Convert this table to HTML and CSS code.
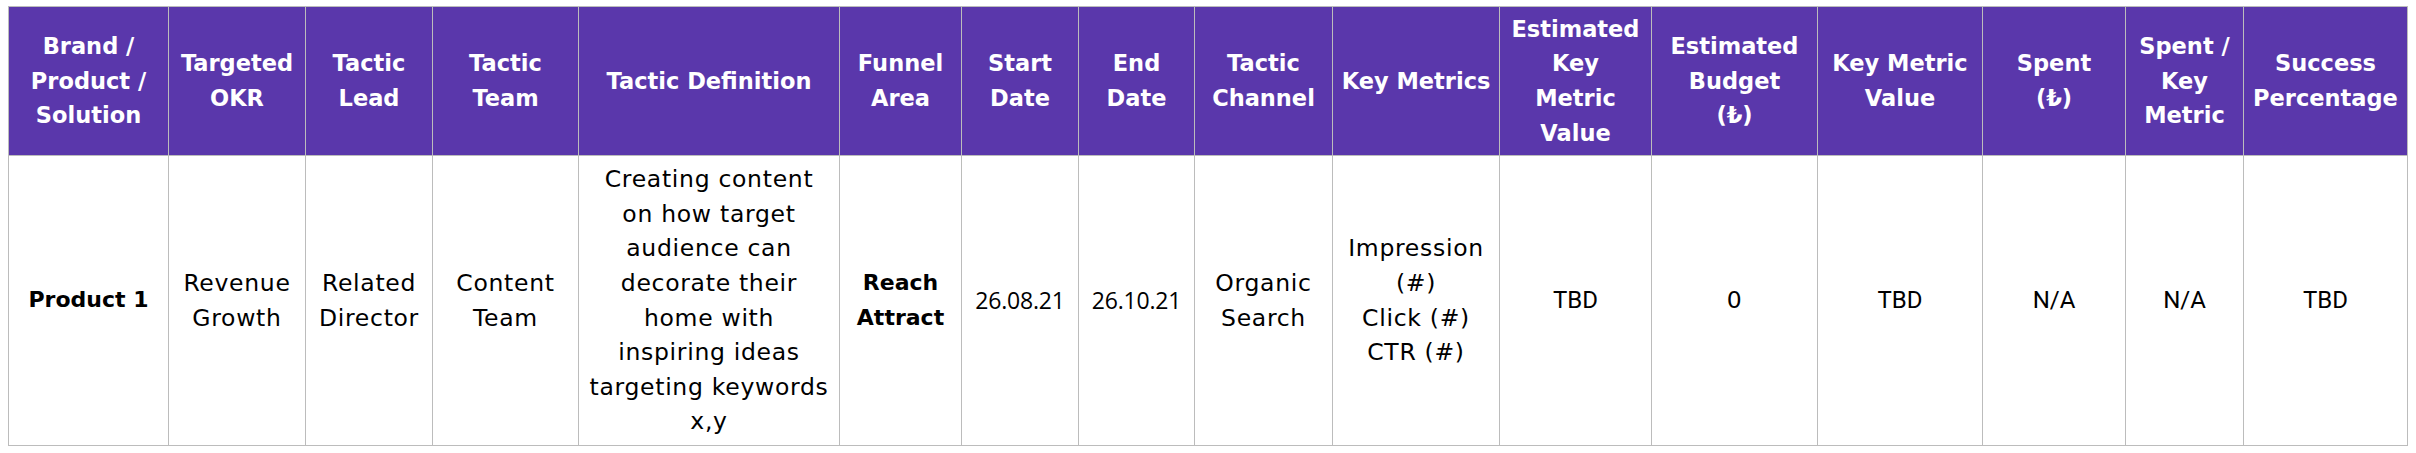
FILE: index.html
```html
<!DOCTYPE html>
<html lang="en">
<head>
<meta charset="utf-8">
<title>Tactics</title>
<link rel="stylesheet" href="styles.css">
</head>
<body>
<table class="plan">
  <colgroup>
    <col class="c1"><col class="c2"><col class="c3"><col class="c4"><col class="c5"><col class="c6"><col class="c7"><col class="c8">
    <col class="c9"><col class="c10"><col class="c11"><col class="c12"><col class="c13"><col class="c14"><col class="c15"><col class="c16">
  </colgroup>
  <thead>
    <tr>
      <th>Brand /<br>Product /<br>Solution</th>
      <th>Targeted<br>OKR</th>
      <th>Tactic<br>Lead</th>
      <th>Tactic<br>Team</th>
      <th>Tactic Definition</th>
      <th>Funnel<br>Area</th>
      <th>Start<br>Date</th>
      <th>End<br>Date</th>
      <th>Tactic<br>Channel</th>
      <th>Key Metrics</th>
      <th>Estimated<br>Key<br>Metric<br>Value</th>
      <th>Estimated<br>Budget<br>(₺)</th>
      <th>Key Metric<br>Value</th>
      <th>Spent<br>(₺)</th>
      <th>Spent /<br>Key<br>Metric</th>
      <th>Success<br>Percentage</th>
    </tr>
  </thead>
  <tbody>
    <tr>
      <td class="strong">Product 1</td>
      <td>Revenue<br>Growth</td>
      <td>Related<br>Director</td>
      <td>Content<br>Team</td>
      <td>Creating content<br>on how target<br>audience can<br>decorate their<br>home with<br>inspiring ideas<br>targeting keywords<br>x,y</td>
      <td class="strong">Reach<br>Attract</td>
      <td class="date">26.08.21</td>
      <td class="date">26.10.21</td>
      <td>Organic<br>Search</td>
      <td>Impression<br>(#)<br>Click (#)<br>CTR (#)</td>
      <td class="alt">TBD</td>
      <td>0</td>
      <td class="alt">TBD</td>
      <td class="alt">N/A</td>
      <td class="alt">N/A</td>
      <td class="alt">TBD</td>
    </tr>
  </tbody>
</table>
</body>
</html>
```
FILE: styles.css
```css
html, body {
  margin: 0;
  padding: 0;
  background: #ffffff;
}

body {
  padding: 6px 8px 0 8px;
  font-family: "DejaVu Sans", "Noto Sans", sans-serif;
}

.plan {
  width: 2399px;
  border-collapse: collapse;
  table-layout: fixed;
}

.c1 { width: 160px; }
.c2 { width: 137px; }
.c3 { width: 127px; }
.c4 { width: 146px; }
.c5 { width: 261px; }
.c6 { width: 122px; }
.c7 { width: 117px; }
.c8 { width: 116px; }
.c9 { width: 138px; }
.c10 { width: 167px; }
.c11 { width: 152px; }
.c12 { width: 166px; }
.c13 { width: 165px; }
.c14 { width: 143px; }
.c15 { width: 118px; }
.c16 { width: 164px; }

.plan th,
.plan td {
  border: 1px solid #bcbcbc;
  text-align: center;
  vertical-align: middle;
  padding: 0 1px;
  line-height: 34.6px;
  white-space: nowrap;
}

.plan thead tr {
  height: 149px;
}

.plan th {
  background: #5a37ab;
  color: #ffffff;
  font-size: 22.5px;
  font-weight: 700;
}

.plan tbody tr {
  height: 290px;
}

.plan td {
  color: #000000;
  font-size: 23.5px;
  font-weight: 400;
  letter-spacing: 0.7px;
}

.plan td.strong {
  font-weight: 700;
  letter-spacing: 0;
  font-size: 22px;
}

.plan td.date {
  font-family: "Open Sans", "Noto Sans", sans-serif;
  font-size: 23px;
  letter-spacing: -0.2px;
}

.plan td.alt {
  font-family: "Roboto", "Liberation Sans", sans-serif;
  font-size: 24px;
  letter-spacing: 0;
}
```
